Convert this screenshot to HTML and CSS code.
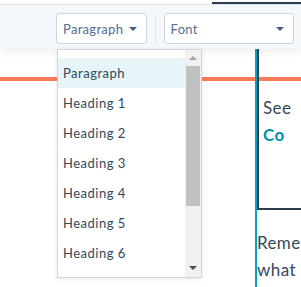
FILE: index.html
```html
<!DOCTYPE html>
<html lang="en">
<head>
  <meta charset="UTF-8" />
  <meta name="viewport" content="width=device-width, initial-scale=1.0" />
  <title>Editor</title>
  <link rel="stylesheet" href="styles.css">
</head>

<body>

  <div class="topbar">
    <div class="topbar-dark"></div>
  </div>

  <div class="toolbar">
    <div class="select select-style">
      <span>Paragraph</span>
      <span class="caret"></span>
    </div>
    <div class="sep"></div>
    <div class="select select-font">
      <span>Font</span>
      <span class="caret"></span>
    </div>
  </div>

  <div class="page">
    <div class="page-left">
      <div class="accent"></div>
    </div>
    <div class="page-right">
      <div class="box">
        <div class="accent"></div>
        <p class="box-text">See</p>
        <p class="box-link">Co</p>
      </div>
      <p class="body-text">Remember<br>what</p>
    </div>
  </div>

  <div class="dropdown">
    <ul class="options">
      <li class="active">Paragraph</li>
      <li>Heading 1</li>
      <li>Heading 2</li>
      <li>Heading 3</li>
      <li>Heading 4</li>
      <li>Heading 5</li>
      <li>Heading 6</li>
      <li>Heading 7</li>
    </ul>
    <div class="scrollbar">
      <span class="arrow-up"></span>
      <div class="thumb"></div>
      <span class="arrow-down"></span>
    </div>
  </div>

</body>
</html>
```

FILE: styles.css
```css
* {
  margin: 0;
  padding: 0;
  box-sizing: border-box;
}

body {
  width: 301px;
  height: 287px;
  overflow: hidden;
  position: relative;
  font-family: 'Lato', 'Open Sans', sans-serif;
  color: #33475b;
  background-color: #ffffff;
}

.topbar {
  height: 4px;
  background-color: #ffffff;
  display: flex;
  justify-content: flex-end;
}

.topbar-dark {
  width: 89px;
  height: 2px;
  margin-top: 2px;
  background-color: #2d3e50;
}

.toolbar {
  height: 45px;
  border-top: 1px solid #dfe3eb;
  background-color: #f5f8fa;
  display: flex;
  align-items: flex-start;
  padding: 8px 7px 0 56px;
  position: relative;
  z-index: 1;
  box-shadow: 0 2px 8px rgba(45, 62, 80, 0.1);
}

.select {
  height: 31px;
  background-color: #ffffff;
  border: 1px solid #cbd6e2;
  border-radius: 3px;
  display: flex;
  align-items: center;
  justify-content: space-between;
  padding: 0 9px 0 6px;
  font-size: 13px;
  letter-spacing: 0.3px;
  color: #516f90;
}

.select-style {
  width: 91px;
}

.select-font {
  width: 131px;
}

.caret {
  width: 0;
  height: 0;
  border-left: 4px solid transparent;
  border-right: 4px solid transparent;
  border-top: 4px solid #425b76;
}

.sep {
  width: 1px;
  height: 30px;
  margin: 1px 8px 0 8px;
  background-color: #dfe3eb;
}

.page {
  display: flex;
  height: 238px;
}

.page-left {
  width: 255px;
  flex-shrink: 0;
  padding-top: 28px;
}

.accent {
  height: 4px;
  background-color: #ff7a59;
}

.page-right {
  flex: 1;
  min-width: 0;
  overflow: hidden;
  border-left: 2px solid #00a4bd;
}

.box {
  height: 161px;
  padding-top: 28px;
  border-left: 2px solid #2d3e50;
  border-bottom: 2px solid #2d3e50;
  white-space: nowrap;
}

.box-text {
  margin: 15px 0 0 4px;
  font-size: 17px;
  letter-spacing: 0.4px;
  line-height: 24px;
}

.box-link {
  margin: 3px 0 0 4px;
  font-size: 17px;
  font-weight: bold;
  letter-spacing: 0.4px;
  line-height: 24px;
  color: #0091ae;
}

.body-text {
  margin-top: 19px;
  font-size: 17px;
  letter-spacing: 0.4px;
  line-height: 27px;
  white-space: nowrap;
}

.dropdown {
  position: absolute;
  left: 57px;
  top: 49px;
  width: 145px;
  height: 229px;
  z-index: 2;
  background-color: #ffffff;
  border: 1px solid #cbd6e2;
  box-shadow: 0 1px 4px rgba(45, 62, 80, 0.12);
  display: flex;
  overflow: hidden;
}

.options {
  flex: 1;
  list-style: none;
  padding-top: 8px;
}

.options li {
  height: 30px;
  line-height: 30px;
  padding-left: 5px;
  font-size: 13px;
  letter-spacing: 0.5px;
  color: #33475b;
}

.options li.active {
  background-color: #e5f5f8;
}

.scrollbar {
  width: 16px;
  background-color: #f1f1f1;
  display: flex;
  flex-direction: column;
  align-items: center;
}

.arrow-up {
  width: 0;
  height: 0;
  margin: 6px 0 6px;
  border-left: 4px solid transparent;
  border-right: 4px solid transparent;
  border-bottom: 4px solid #a3a3a3;
}

.thumb {
  width: 14px;
  height: 140px;
  background-color: #c1c1c1;
}

.arrow-down {
  width: 0;
  height: 0;
  margin-top: auto;
  margin-bottom: 7px;
  border-left: 4px solid transparent;
  border-right: 4px solid transparent;
  border-top: 4px solid #505050;
}
```
